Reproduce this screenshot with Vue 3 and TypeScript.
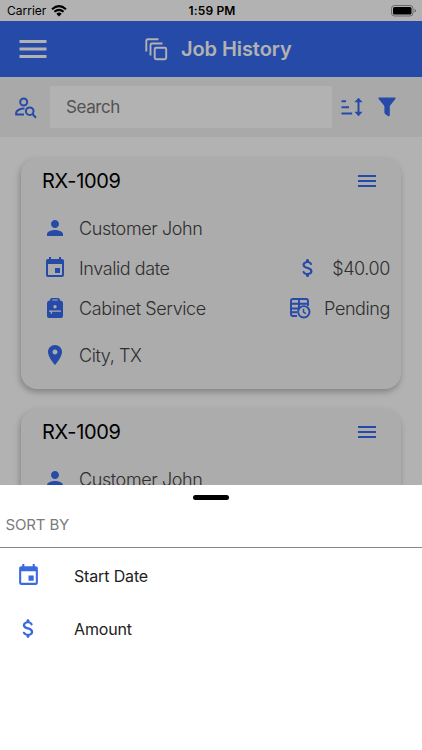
<script setup lang="ts">
interface Job {
  id: string
  customer: string
  date: string
  service: string
  city: string
  amount: string
  status: string
}

const job: Job = {
  id: 'RX-1009',
  customer: 'Customer John',
  date: 'Invalid date',
  service: 'Cabinet Service',
  city: 'City, TX',
  amount: '$40.00',
  status: 'Pending',
}
const jobs: Job[] = [job, { ...job }]

// The sheet covers everything below the first row of the last card.
const isExpanded = (i: number): boolean => i < jobs.length - 1

const paths = {
  menu: 'M3 18h18v-2H3v2zm0-5h18v-2H3v2zm0-7v2h18V6H3z',
  person:
    'M12 12c2.21 0 4-1.79 4-4s-1.79-4-4-4-4 1.79-4 4 1.79 4 4 4zm0 2c-2.67 0-8 1.34-8 4v2h16v-2c0-2.66-5.33-4-8-4z',
  event:
    'M17 12h-5v5h5v-5zM16 1v2H8V1H6v2H5c-1.11 0-1.99.9-1.99 2L3 19c0 1.1.89 2 2 2h14c1.1 0 2-.9 2-2V5c0-1.1-.9-2-2-2h-1V1h-2zm3 18H5V8h14v11z',
  pin: 'M12 2C8.13 2 5 5.13 5 9c0 5.25 7 13 7 13s7-7.75 7-13c0-3.87-3.13-7-7-7zm0 9.5c-1.38 0-2.5-1.12-2.5-2.5s1.12-2.5 2.5-2.5 2.5 1.12 2.5 2.5-1.12 2.5-2.5 2.5z',
  bag: 'M9 2h6a2 2 0 0 1 2 2v.5a3 3 0 0 1 3 3V20a2 2 0 0 1-2 2H6a2 2 0 0 1-2-2V7.500a3 3 0 0 1 3-3V4a2 2 0 0 1 2-2zm.3 1.500V4.500h5.400V3.500zM12 9a1.700 1.700 0 1 0 0 3.400 1.700 1.700 0 0 0 0-3.400zM6 14.600v1.100h1.700v2h1.300v-2h9v-1.100z',
  money:
    'M11.8 10.900c-2.270-.590-3-1.200-3-2.150 0-1.090 1.010-1.850 2.700-1.850 1.420 0 2.130.540 2.390 1.400.120.400.450.700.870.700h.300c.660 0 1.130-.650.900-1.270-.420-1.180-1.400-2.160-2.960-2.540V4.500c0-.830-.670-1.500-1.500-1.500S10 3.670 10 4.500v.660c-1.940.420-3.500 1.680-3.500 3.610 0 2.310 1.910 3.460 4.700 4.130 2.500.600 3 1.480 3 2.410 0 .690-.490 1.790-2.700 1.790-1.650 0-2.500-.590-2.830-1.430-.150-.390-.490-.670-.900-.670h-.280c-.670 0-1.140.680-.890 1.300.570 1.390 1.900 2.210 3.400 2.530v.670c0 .830.670 1.500 1.500 1.500s1.500-.670 1.500-1.500v-.650c1.950-.370 3.500-1.500 3.500-3.550 0-2.840-2.430-3.810-4.700-4.400z',
}
</script>

<template>
  <div class="screen">
    <div class="status">
      <div class="carrier">
        <span>Carrier</span>
        <svg width="16" height="12" viewBox="0 0 16 12">
          <path d="M1 4.200Q8-1.800 15 4.200M3.400 6.800Q8 2.900 12.600 6.800" fill="none" stroke="#000" stroke-width="2.100" />
          <path d="M5.300 8.700Q8 6.500 10.700 8.700L8 11.600z" />
        </svg>
      </div>
      <span class="clock">1:59 PM</span>
      <svg class="battery" width="26" height="12" viewBox="0 0 26 12">
        <rect x=".5" y=".5" width="21.500" height="10.500" rx="3" fill="none" stroke="#999" />
        <rect x="2" y="2" width="18.500" height="7.500" rx="1.500" />
        <path d="M23.500 4v3.600q1.600-.6 1.600-1.800T23.500 4z" fill="#999" />
      </svg>
    </div>

    <header class="header">
      <svg width="36" height="36" viewBox="0 0 24 24"><path :d="paths.menu" /></svg>
      <div class="title">
        <svg width="23" height="23" viewBox="0 0 23 23" fill="none" stroke="currentColor" stroke-width="1.900">
          <rect x="9.700" y="9.700" width="11.500" height="11.500" rx="1.500" />
          <path d="M5.500 17.500V7a1.500 1.500 0 0 1 1.500-1.500h10.500M1.300 13.500V2.800a1.500 1.500 0 0 1 1.500-1.500H13.500" />
        </svg>
        <h1>Job History</h1>
      </div>
    </header>

    <div class="searchbar">
      <svg class="people" width="22" height="22" viewBox="0 0 22 22" fill="none" stroke="currentColor" stroke-width="2">
        <circle cx="8.700" cy="5" r="3.500" />
        <path d="M9.500 11.600C5.500 11.500 1.200 13.500 1.200 15.600V17.500H9" />
        <circle cx="14.700" cy="14.200" r="3.800" />
        <path d="M17.400 17l3.600 3.700" />
      </svg>
      <div class="field">Search</div>
      <svg class="sort" width="22" height="22" viewBox="0 0 22 22" fill="none" stroke="currentColor" stroke-width="2">
        <path d="M.5 5.300H5M.5 11.300H8M.5 17.500H11.200M17.500 4v14" />
        <path d="M13.400 6.300l4.100-4.500 4.100 4.500zM13.400 15.700l4.100 4.500 4.100-4.500z" fill="currentColor" stroke="none" />
      </svg>
      <svg class="funnel" width="18" height="20" viewBox="0 0 18 20">
        <path d="M1 .5h16q1 .3.500 1.300L11.800 9v9.300q-.3 1.500-1.700.9l-3-2.300q-.7-.5-.7-1.300V9L.5 1.800Q0 .8 1 .5z" />
      </svg>
    </div>

    <main class="list">
      <article v-for="(item, i) in jobs" :key="i" class="card">
        <div class="card-head">
          <h2>{{ item.id }}</h2>
          <svg width="24" height="24" viewBox="0 0 24 24"><path :d="paths.menu" /></svg>
        </div>
        <div class="row">
          <svg width="24" height="24" viewBox="0 0 24 24"><path :d="paths.person" /></svg>
          <span>{{ item.customer }}</span>
        </div>
        <template v-if="isExpanded(i)">
          <div class="row">
            <svg width="24" height="24" viewBox="0 0 24 24"><path :d="paths.event" /></svg>
            <span>{{ item.date }}</span>
            <div class="side">
              <svg width="24" height="24" viewBox="0 0 24 24"><path :d="paths.money" /></svg>
              <span>{{ item.amount }}</span>
            </div>
          </div>
          <div class="row">
            <svg width="24" height="24" viewBox="0 0 24 24"><path fill-rule="evenodd" :d="paths.bag" /></svg>
            <span>{{ item.service }}</span>
            <div class="side">
              <svg width="24" height="24" viewBox="0 0 24 24" fill="none" stroke="currentColor" stroke-width="1.900">
                <path d="M9 20H5a2 2 0 0 1-2-2V5a2 2 0 0 1 2-2h13a2 2 0 0 1 2 2v5M3 7.800h17M3 12.500h8M3 16.200h6M11 4v8.500" />
                <circle cx="15.800" cy="15.800" r="5.700" />
                <path d="M15.500 12.800v3.400l2.400 1.500" stroke-width="1.500" />
              </svg>
              <span>{{ item.status }}</span>
            </div>
          </div>
          <div class="row city">
            <svg width="24" height="24" viewBox="0 0 24 24"><path :d="paths.pin" /></svg>
            <span>{{ item.city }}</span>
          </div>
        </template>
      </article>
    </main>

    <div class="scrim"></div>

    <section class="sheet">
      <div class="handle"></div>
      <div class="sheet-title">SORT BY</div>
      <div class="option">
        <svg width="25" height="25" viewBox="0 0 24 24"><path :d="paths.event" /></svg>
        <span>Start Date</span>
      </div>
      <div class="option">
        <svg width="25" height="25" viewBox="0 0 24 24"><path :d="paths.money" /></svg>
        <span>Amount</span>
      </div>
    </section>
  </div>
</template>

<style>
body {
  margin: 0;
}
</style>

<style scoped>
.screen {
  position: relative;
  height: 750px;
  overflow: hidden;
  background: #fff;
  font-family: Inter, 'Liberation Sans', sans-serif;
  color: #000;
}
svg {
  display: block;
  flex: none;
  fill: currentColor;
}
svg[fill='none'] {
  fill: none;
}
h1,
h2 {
  margin: 0;
}
.status {
  height: 21px;
  box-sizing: border-box;
  padding: 0 5px 0 7px;
  display: grid;
  grid-template-columns: 1fr auto 1fr;
  align-items: center;
  font-size: 12px;
}
.carrier {
  display: flex;
  align-items: center;
  gap: 5px;
}
.clock {
  font-weight: 600;
  letter-spacing: 0.15px;
}
.battery {
  justify-self: end;
}
.header {
  height: 56px;
  display: flex;
  align-items: center;
  padding-left: 15px;
  background: #366af0;
  color: #fff;
}
.title {
  display: flex;
  align-items: center;
  gap: 13px;
  margin-left: 94px;
}
h1 {
  font-size: 20px;
  line-height: 24px;
  font-weight: 600;
  letter-spacing: -0.08px;
}
.searchbar {
  height: 60px;
  display: flex;
  align-items: center;
  padding-left: 14.5px;
  background: #f3f3f3;
  color: #366af0;
}
.people {
  margin-top: 2px;
}
.field {
  width: 282px;
  height: 42px;
  box-sizing: border-box;
  padding-left: 16px;
  margin-left: 13.5px;
  line-height: 42px;
  background: #fff;
  color: #777;
  font-size: 17px;
  letter-spacing: -0.4px;
}
.sort {
  margin-left: 9px;
}
.funnel {
  margin-left: 14.5px;
}
.list {
  display: flex;
  flex-direction: column;
  gap: 20px;
  padding: 21px 21px 0;
}
.card {
  height: 231px;
  box-sizing: border-box;
  padding: 10px 11px 0 21px;
  border-radius: 16px;
  background: #f7f7f7;
  box-shadow: -1px 3px 6px rgba(0, 0, 0, 0.27);
}
.card svg {
  color: #366af0;
}
.card-head {
  height: 25px;
  display: flex;
  align-items: center;
  justify-content: space-between;
  padding-right: 11px;
}
h2 {
  font-size: 20px;
  font-weight: 400;
  letter-spacing: -0.3px;
}
.row {
  height: 40px;
  display: flex;
  align-items: center;
  gap: 12px;
  padding-left: 1px;
  font-size: 18px;
  font-weight: 300;
  letter-spacing: -0.4px;
  color: #444;
}
.card-head + .row {
  margin-top: 15px;
}
.row.city {
  margin-top: 7px;
}
.side {
  display: flex;
  align-items: center;
  gap: 12px;
  margin-left: auto;
}
.scrim {
  position: absolute;
  inset: 0;
  background: rgba(0, 0, 0, 0.3);
}
.sheet {
  position: absolute;
  inset: 485px 0 0;
  background: #fff;
}
.handle {
  width: 36px;
  height: 5px;
  margin: 10px auto 0;
  border-radius: 3px;
  background: #000;
}
.sheet-title {
  height: 48px;
  box-sizing: border-box;
  padding: 14px 0 0 5.5px;
  border-bottom: 1px solid #858585;
  color: #7b7b7b;
  font-size: 15px;
  line-height: 22px;
  letter-spacing: -0.15px;
}
.option {
  height: 53px;
  display: flex;
  align-items: center;
  gap: 33px;
  padding-left: 16px;
  color: #222;
  font-size: 16px;
  letter-spacing: -0.15px;
}
.sheet-title + .option {
  margin-top: 1px;
}
.option svg {
  color: #3b6ae0;
}
</style>
